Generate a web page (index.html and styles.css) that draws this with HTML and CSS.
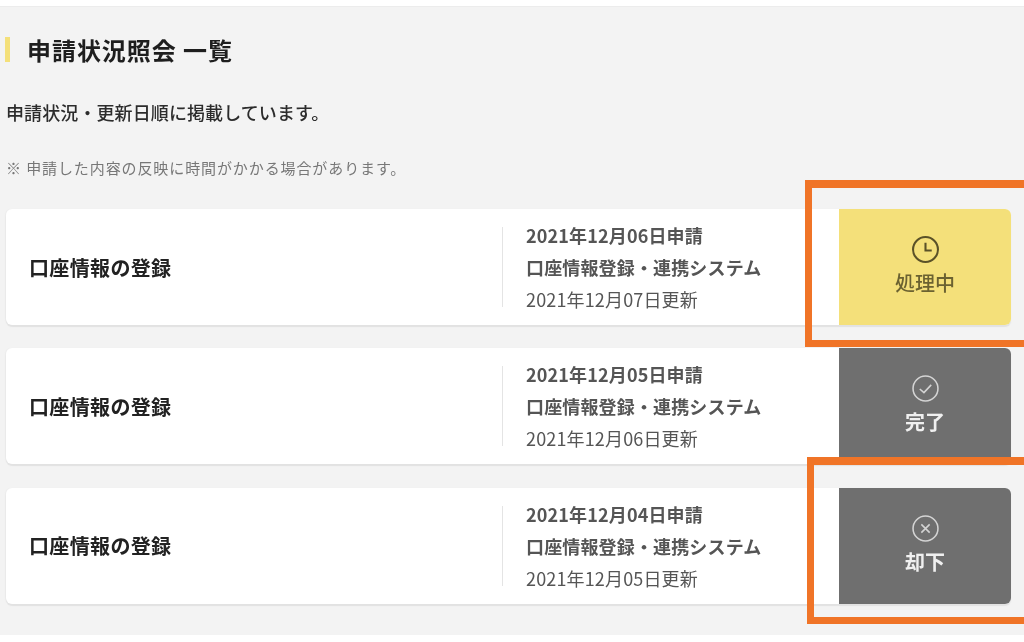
FILE: index.html
```html
<!DOCTYPE html>
<html lang="ja">
<head>
  <meta charset="UTF-8">
  <title>申請状況照会 一覧</title>
  <link rel="stylesheet" href="styles.css">
</head>
<body>
<div class="page">
  <h1 class="title">申請状況照会 一覧</h1>
  <p class="lead">申請状況・更新日順に掲載しています。</p>
  <p class="note">※ 申請した内容の反映に時間がかかる場合があります。</p>

  <div class="list">
    <div class="card">
      <div class="card-name">口座情報の登録</div>
      <div class="card-info">
        <p class="strong">2021年12月06日申請</p>
        <p class="strong">口座情報登録・連携システム</p>
        <p>2021年12月07日更新</p>
      </div>
      <div class="status status-wait">
        <svg class="icon" viewBox="0 0 26 26"><circle cx="13" cy="13" r="12"/><path d="M13 6.5V14H19"/></svg>
        <span>処理中</span>
      </div>
    </div>

    <div class="card">
      <div class="card-name">口座情報の登録</div>
      <div class="card-info">
        <p class="strong">2021年12月05日申請</p>
        <p class="strong">口座情報登録・連携システム</p>
        <p>2021年12月06日更新</p>
      </div>
      <div class="status status-done">
        <svg class="icon" viewBox="0 0 26 26"><circle cx="13" cy="13" r="12"/><path d="M7.5 13.5L11.5 17L18.5 9.5"/></svg>
        <span>完了</span>
      </div>
    </div>

    <div class="card">
      <div class="card-name">口座情報の登録</div>
      <div class="card-info">
        <p class="strong">2021年12月04日申請</p>
        <p class="strong">口座情報登録・連携システム</p>
        <p>2021年12月05日更新</p>
      </div>
      <div class="status status-done">
        <svg class="icon" viewBox="0 0 26 26"><circle cx="13" cy="13" r="12"/><path d="M9 9L17 17M17 9L9 17"/></svg>
        <span>却下</span>
      </div>
    </div>
  </div>

  <div class="mark mark-first"></div>
  <div class="mark mark-second"></div>
</div>
</body>
</html>
```

FILE: styles.css
```css
* { box-sizing: border-box; margin: 0; padding: 0; }
html, body { height: 100%; }
body {
  background: #fff;
  color: #222;
  font-family: "Noto Sans CJK JP", "Noto Sans", sans-serif;
  overflow: hidden;
  padding-top: 6px;
}
.page {
  position: relative;
  height: 629px;
  background: #f3f3f3;
  border-top: 1px solid #ececec;
  padding: 30px 13px 0 6px;
  overflow: hidden;
  filter: blur(0.6px);
}
.title {
  border-left: 5px solid #f4e07a;
  margin-left: -1px;
  padding-left: 17px;
  font-size: 24px;
  line-height: 25px;
  font-weight: 700;
  letter-spacing: 0.95px;
  color: #1e1e1e;
}
.lead {
  margin: 38px 0 0;
  font-size: 18px;
  line-height: 25px;
  letter-spacing: 0.1px;
  font-weight: 500;
  color: #2c2c2c;
}
.note {
  margin: 33px 0 0;
  font-size: 15px;
  line-height: 20px;
  letter-spacing: 0.9px;
  color: #777;
}
.list {
  margin-top: 31px;
  display: flex;
  flex-direction: column;
  gap: 23.4px;
}
.card {
  display: flex;
  align-items: center;
  height: 116px;
  background: #fff;
  border-radius: 6px;
  box-shadow: 0 2px 1px #e2e2e2, -1px 0 1px #ececec;
}
.card-name {
  width: 496px;
  padding-left: 23px;
  font-size: 20px;
  letter-spacing: 0.35px;
  font-weight: 700;
  color: #222;
}
.card-info {
  flex: 1;
  height: 80px;
  display: flex;
  flex-direction: column;
  justify-content: center;
  border-left: 1px solid #e4e4e4;
  padding-left: 23px;
  font-size: 18px;
  line-height: 32px;
  letter-spacing: 0.15px;
  color: #555;
}
.card-info p { flex: none; }
.strong { font-weight: 700; }
.status {
  width: 172px;
  height: 116px;
  display: flex;
  flex-direction: column;
  align-items: center;
  justify-content: center;
  gap: 7px;
  padding-bottom: 2px;
  border-radius: 0 6px 6px 0;
  font-size: 20px;
  line-height: 26px;
}
.status-wait { background: #f4e07a; color: #6b6231; font-weight: 500; }
.status-done { background: #6f6f6f; color: #f0f0f0; font-weight: 700; }
.icon {
  width: 27px;
  height: 27px;
  fill: none;
  stroke: currentColor;
  stroke-width: 1.6;
}
.status-wait .icon { stroke: #5a5128; stroke-width: 2; }
.status-done .icon { stroke: #d4d4d4; stroke-width: 1.5; }
.mark {
  position: absolute;
  right: -20px;
  border: 7px solid #f07427;
  border-width: 8px 7px 7px 7px;
}
.mark-first { left: 805px; top: 173px; height: 167px; }
.mark-second { left: 807px; top: 450px; height: 167px; }
```
